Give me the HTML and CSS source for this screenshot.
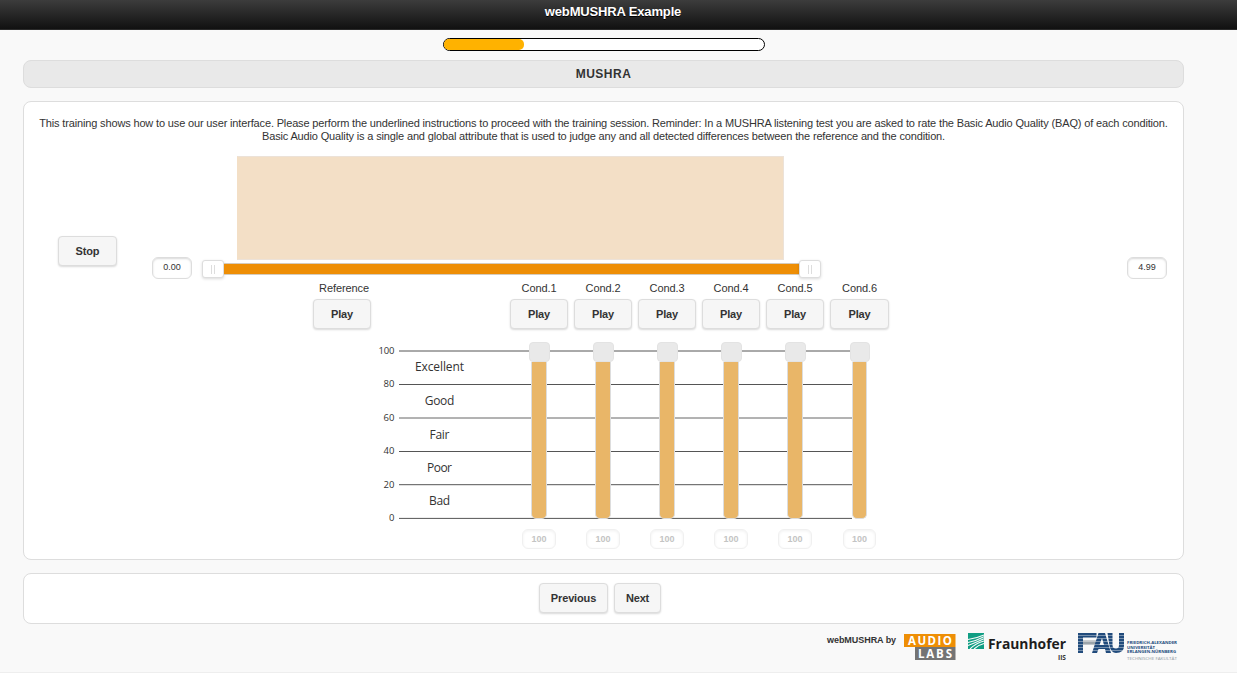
FILE: index.html
```html
<!DOCTYPE html>
<html lang="en">
<head>
<meta charset="utf-8">
<title>webMUSHRA Example</title>
<link rel="stylesheet" href="styles.css">
</head>
<body>
<div class="page">
  <header class="header"><h1><span>webMUSHRA Example</span></h1></header>
  <div class="progress"><div class="progress-fill"></div></div>
  <h2 class="title-bar"><span>MUSHRA</span></h2>

  <main class="card trial">
    <p class="intro"><span class="l1">This training shows how to use our user interface. Please perform the underlined instructions to proceed with the training session. Reminder: In a MUSHRA listening test you are asked to rate the Basic Audio Quality (BAQ) of each condition.</span><br><span class="l2">Basic Audio Quality is a single and global attribute that is used to judge any and all detected differences between the reference and the condition.</span></p>

    <section class="player">
      <button class="btn stop">Stop</button>
      <div class="time">0.00</div>
      <div class="wave-col">
        <div class="wave"></div>
        <div class="range"><i class="handle"></i><div class="range-track"></div><i class="handle"></i></div>
      </div>
      <div class="time end">4.99</div>
    </section>

    <section class="stimuli">
      <div class="stim ref"><span>Reference</span><button class="btn">Play</button></div>
      <div class="stim"><span>Cond.1</span><button class="btn">Play</button></div>
      <div class="stim"><span>Cond.2</span><button class="btn">Play</button></div>
      <div class="stim"><span>Cond.3</span><button class="btn">Play</button></div>
      <div class="stim"><span>Cond.4</span><button class="btn">Play</button></div>
      <div class="stim"><span>Cond.5</span><button class="btn">Play</button></div>
      <div class="stim last"><span>Cond.6</span><button class="btn">Play</button></div>
    </section>

    <section class="chart">
      <svg class="scale" width="480" height="184" viewBox="0 0 480 184">
        <g class="lines">
          <path d="M22 11H475"/><path d="M22 44.500H475"/><path class="light" d="M22 78H475"/><path d="M22 111.500H475"/><path d="M22 144.700H475"/><path d="M22 178.400H475"/>
        </g>
        <g class="ticks">
          <text x="17.500" y="14" textLength="16">100</text><text x="17.500" y="47" textLength="11">80</text><text x="17.500" y="80.500" textLength="11">60</text><text x="17.500" y="114" textLength="11">40</text><text x="17.500" y="147.500" textLength="11">20</text><text x="17.500" y="181">0</text>
        </g>
        <g class="grades">
          <text x="62.500" y="31" textLength="49">Excellent</text><text x="62.500" y="64.500" textLength="29.500">Good</text><text x="62.500" y="98.500" textLength="20">Fair</text><text x="62.500" y="132" textLength="25">Poor</text><text x="62.500" y="165" textLength="21">Bad</text>
        </g>
      </svg>
      <div class="sliders">
        <div class="slider"><i></i><b></b><span>100</span></div>
        <div class="slider"><i></i><b></b><span>100</span></div>
        <div class="slider"><i></i><b></b><span>100</span></div>
        <div class="slider"><i></i><b></b><span>100</span></div>
        <div class="slider"><i></i><b></b><span>100</span></div>
        <div class="slider last"><i></i><b></b><span>100</span></div>
      </div>
    </section>
  </main>

  <nav class="card nav"><button class="btn prev">Previous</button><button class="btn next">Next</button></nav>

  <footer class="footer">
    <span class="by">webMUSHRA by</span>
    <svg class="audiolabs" width="52" height="28" viewBox="0 0 52 28">
      <path fill="#ee8e05" d="M0 0h51.500v13H0z"/><path fill="#747474" d="M11 13h40.500v13H11z"/>
      <text x="4" y="11" textLength="44">AUDIO</text><text x="14" y="24" textLength="34">LABS</text>
    </svg>
    <svg class="fraunhofer" width="101" height="30" viewBox="0 0 101 30">
      <path fill="#109e83" d="M0 0h16v16H0z"/>
      <g fill="none" stroke="#f9f9f9" stroke-width="1.100"><path d="M0 6.500Q8 5.500 16 2"/><path d="M0 9.500Q8 8 16 3.800"/><path d="M0 12.500Q8 9.500 16 5.800"/><path d="M2 16Q8 10 16 8"/><path d="M6 16Q10 12 16 10.500"/></g>
      <text class="fh" x="20" y="16" textLength="78" lengthAdjust="spacingAndGlyphs">Fraunhofer</text>
      <text class="iis" x="90" y="27" textLength="8" lengthAdjust="spacingAndGlyphs">IIS</text>
    </svg>
    <svg class="fau" width="102" height="30" viewBox="0 0 102 30">
      <path fill="#214b7c" d="M0 0H18.500V4.500H5V20H0z"/>
      <path fill="#9ba4aa" d="M5 7.500H19L17.500 12H5z"/>
      <path fill="#214b7c" fill-rule="evenodd" d="M14 20L20.500 0H27L33 20H28L27 16H20.500L19 20zM21.500 12H26L24 5z"/>
      <path fill="#214b7c" d="M29.500 0H34.500V12Q34.500 15.500 38 15.500Q41 15.500 41 12V0H46V13Q46 20 38 20Q33 20 31.500 13z"/>
      <path stroke="#f9f9f9" stroke-opacity=".5" stroke-width=".8" d="M0 2.500H47M0 5.500H47M0 8.500H47M0 11.500H47M0 14.500H47M0 17.500H47"/>
      <g class="fautext"><text x="49" y="11.200" textLength="50" lengthAdjust="spacingAndGlyphs">FRIEDRICH-ALEXANDER</text><text x="49" y="15.500" textLength="28" lengthAdjust="spacingAndGlyphs">UNIVERSITÄT</text><text x="49" y="19.800" textLength="49" lengthAdjust="spacingAndGlyphs">ERLANGEN-NÜRNBERG</text></g>
      <text class="fac" x="49" y="27" textLength="50" lengthAdjust="spacingAndGlyphs">TECHNISCHE FAKULTÄT</text>
    </svg>
  </footer>
</div>
</body>
</html>
```
FILE: styles.css
```css
* { box-sizing: border-box; }
body { margin: 0; background: #fff; font-family: "Liberation Sans", Arial, sans-serif; font-size: 11px; color: #333; }
.page { height: 673px; background: #f9f9f9; border-bottom: 1px solid #eee; overflow: hidden; }
.header { height: 30px; background: linear-gradient(#3c3c3c, #111); border-bottom: 1px solid #2a2a2a; text-align: center; padding: 4px 11px 0 0; }
.header h1 { margin: 0; font-size: 13px; letter-spacing: -.15px; line-height: 16px; color: #fff; text-shadow: 0 1px 0 #000; }
.progress { width: 322px; height: 13px; margin: 8px 0 0 443px; border: 1px solid #000; border-radius: 7px; background: #fff; }
.progress-fill { width: 80px; height: 11px; border-radius: 5px; background: #ffb200; }
.title-bar { width: 1161px; height: 28px; margin: 9px 0 13px 23px; border: 1px solid #ddd; border-radius: 8px; background: #e9e9e9; font-size: 12px; line-height: 26px; letter-spacing: .5px; text-align: center; text-shadow: 0 1px 0 #eee; }
.card { width: 1161px; margin-left: 23px; background: #fff; border: 1px solid #ddd; border-radius: 8px; }
.trial { height: 459px; padding-top: 15px; }
.intro { margin: 0; height: 39px; line-height: 13px; text-align: center; white-space: nowrap; font-size: 11px; letter-spacing: -.152px; }
.btn { display: block; width: 58px; height: 30px; padding: 0 0 1px; font: bold 11px "Liberation Sans", Arial, sans-serif; letter-spacing: -.15px; color: #333; background: #f6f6f6; border: 1px solid #ddd; border-radius: 4px; box-shadow: 0 1px 2px rgba(0,0,0,.15); text-shadow: 0 1px 0 #f3f3f3; }
.player { display: flex; align-items: flex-end; height: 124px; padding-left: 34px; }
.player .stop { margin-bottom: 14px; width: 59px; }
.time { width: 40px; height: 22px; margin: 0 10px 1px 35px; border: 1px solid #ddd; border-radius: 6px; box-shadow: inset 0 1px 2px rgba(0,0,0,.15); text-align: center; font-size: 9px; line-height: 18px; }
.time.end { margin: 0 0 1px 306px; }
.wave-col { width: 619px; height: 124px; }
.wave { width: 547px; height: 104px; margin-left: 35px; border: 1px solid #ece2d8; border-left-color: #f3dfc6; background: #f3dfc6; }
.range { display: flex; align-items: center; height: 18px; }
.range-track { flex: 1; height: 12px; margin-top: -1px; background: #ee8e05; border: solid #d4cbbd; border-width: 1px 0; }
.handle { display: flex; width: 22px; height: 18px; border: 1px solid #ddd; border-radius: 3px; background: #fff; box-shadow: 0 1px 3px rgba(0,0,0,.15); justify-content: center; align-items: center; }
.handle::before { content: ""; box-sizing: border-box; width: 4px; height: 9px; border: solid #ddd; border-width: 0 1px; }
.stimuli { display: flex; gap: 6px; height: 59px; padding: 2px 0 0 289px; }
.stim { width: 58px; text-align: center; font-size: 11px; line-height: 13px; }
.stim span { display: block; height: 17px; letter-spacing: -.1px; white-space: nowrap; }
.stim.ref { margin-right: 133px; }
.stim.ref span { padding-left: 4px; }
.stim.last, .stim.last .btn { width: 59px; }
.chart { position: relative; height: 220px; padding-left: 353px; }
.scale { display: block; margin-top: 1px; }
.lines path { stroke: #555; stroke-width: 1; }
.lines .light { stroke: #666; }
.ticks { font: 9.5px "Open Sans", sans-serif; fill: #333; text-anchor: end; }
.grades { font: 12px "Open Sans", sans-serif; fill: #333; text-anchor: middle; }
.sliders { position: absolute; left: 498px; top: 2px; display: flex; gap: 30px; }
.slider { width: 34px; display: flex; flex-direction: column; align-items: center; }
.slider i { width: 21px; height: 20px; border: 1px solid #e3e3e3; border-radius: 4px; background: #e9e9e9; }
.slider b { width: 16px; height: 157px; border: 1px solid #ddd; border-top: 0; border-radius: 0 0 5px 5px; background: #e9b668; }
.slider span { width: 34px; height: 20px; margin-top: 10px; border: 1px solid #f0f0f0; border-radius: 6px; box-shadow: inset 0 1px 3px rgba(0,0,0,.06); font-size: 9px; font-weight: bold; line-height: 18px; text-align: center; color: #c4c4c4; }
.slider.last { width: 33px; margin-left: 1px; }
.slider.last i { width: 20px; }
.slider.last b { width: 15px; }
.slider.last span { width: 33px; }
.nav { height: 51px; margin-top: 13px; padding: 9px 0 0 515px; display: flex; gap: 6px; }
.nav .prev { width: 69px; }
.nav .next { width: 47px; }
.footer { display: flex; height: 40px; padding: 9px 0 0 827px; }
.by { width: 77px; padding-top: 2px; line-height: 10px; font-size: 9px; font-weight: bold; letter-spacing: -.05px; }
.audiolabs { margin: 1px 12px 0 0; }
.audiolabs text { font: bold 11.5px/1 "Open Sans", sans-serif; fill: #fff; }
.fraunhofer { margin-right: 9px; overflow: visible; }
.fh { font: bold 15px "Open Sans", sans-serif; fill: #1d1d1d; }
.iis { font: bold 7px "Open Sans", sans-serif; fill: #333; }
.fautext { font: bold 4.2px "Open Sans", sans-serif; fill: #214b7c; }
.fac { font: 4px "Open Sans", sans-serif; fill: #8d969c; }
```
